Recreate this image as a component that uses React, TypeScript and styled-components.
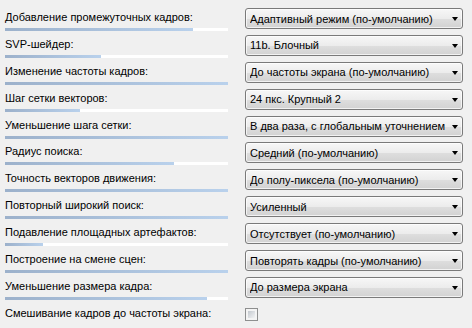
import React from 'react';
import styled, { createGlobalStyle } from 'styled-components';

const GlobalStyle = createGlobalStyle`
  html, body {
    margin: 0;
    padding: 0;
    background: #f0f0f0;
  }
  body {
    font-family: Tahoma, "Liberation Sans", "DejaVu Sans", sans-serif;
    font-size: 11px;
    color: #000;
  }
`;

const Panel = styled.div`
  width: 472px;
  height: 328px;
  padding: 5px 9px 0 5px;
  box-sizing: border-box;
  background: #f0f0f0;
`;

const Row = styled.div`
  display: grid;
  grid-template-columns: 223px 218px;
  column-gap: 17px;
  height: 26.9px;
`;

const LabelCell = styled.div`
  display: flex;
  flex-direction: column;
`;

const Label = styled.div`
  margin-top: 6px;
  height: 13px;
  line-height: 13px;
  white-space: nowrap;
`;

const Track = styled.div`
  margin-top: 4px;
  height: 3px;
  background: #ffffff;
`;

const Fill = styled.div<{ $fill: number }>`
  height: 100%;
  width: ${(p) => p.$fill * 100}%;
  background: linear-gradient(to right, #9cb1cb, #b9d1ec);
`;

const Combo = styled.div`
  margin-top: 3px;
  height: 21px;
  box-sizing: border-box;
  border: 1px solid #7a7a7a;
  border-radius: 3px;
  background: linear-gradient(#f7f7f7 0%, #ececec 50%, #dedede 52%, #d2d2d2 100%);
  box-shadow: inset 0 0 0 1px rgba(255, 255, 255, 0.7);
  display: flex;
  align-items: center;
  padding: 0 3px 0 4px;
  white-space: nowrap;
`;

const ComboText = styled.span`
  flex: 1;
  min-width: 0;
  overflow: hidden;
`;

const Arrow = styled.span`
  flex: none;
  width: 0;
  height: 0;
  border-left: 3.5px solid transparent;
  border-right: 3.5px solid transparent;
  border-top: 4px solid #000;
  margin-right: 1px;
  margin-top: 1px;
`;

const CheckCell = styled.div`
  padding-top: 3px;
  display: flex;
  align-items: center;
  height: 21px;
`;

const CheckBox = styled.span`
  width: 13px;
  height: 13px;
  box-sizing: border-box;
  border: 1px solid #8e8f8f;
  background: #f4f4f4;
  padding: 2px;
  display: flex;
`;

const CheckInner = styled.span`
  flex: 1;
  background: linear-gradient(135deg, #c3c8ce, #f2f3f4);
`;

type Setting = {
  label: string;
  value?: string;
  fill?: number;
};

const settings: Setting[] = [
  { label: 'Добавление промежуточных кадров:', value: 'Адаптивный режим (по-умолчанию)', fill: 188 / 223 },
  { label: 'SVP-шейдер:', value: '11b. Блочный', fill: 96 / 223 },
  { label: 'Изменение частоты кадров:', value: 'До частоты экрана (по-умолчанию)', fill: 1 },
  { label: 'Шаг сетки векторов:', value: '24 пкс. Крупный 2', fill: 75 / 223 },
  { label: 'Уменьшение шага сетки:', value: 'В два раза, с глобальным уточнением', fill: 1 },
  { label: 'Радиус поиска:', value: 'Средний (по-умолчанию)', fill: 169 / 223 },
  { label: 'Точность векторов движения:', value: 'До полу-пиксела (по-умолчанию)', fill: 1 },
  { label: 'Повторный широкий поиск:', value: 'Усиленный', fill: 1 },
  { label: 'Подавление площадных артефактов:', value: 'Отсутствует (по-умолчанию)', fill: 38 / 223 },
  { label: 'Построение на смене сцен:', value: 'Повторять кадры (по-умолчанию)', fill: 1 },
  { label: 'Уменьшение размера кадра:', value: 'До размера экрана', fill: 202 / 223 },
  { label: 'Смешивание кадров до частоты экрана:' },
];

const App: React.FC = () => {
  return (
    <>
      <GlobalStyle />
      <Panel>
        {settings.map((s) => (
          <Row key={s.label}>
            <LabelCell>
              <Label>{s.label}</Label>
              {s.fill !== undefined && (
                <Track>
                  <Fill $fill={s.fill} />
                </Track>
              )}
            </LabelCell>
            {s.value !== undefined ? (
              <Combo>
                <ComboText>{s.value}</ComboText>
                <Arrow />
              </Combo>
            ) : (
              <CheckCell>
                <CheckBox>
                  <CheckInner />
                </CheckBox>
              </CheckCell>
            )}
          </Row>
        ))}
      </Panel>
    </>
  );
};

export default App;
